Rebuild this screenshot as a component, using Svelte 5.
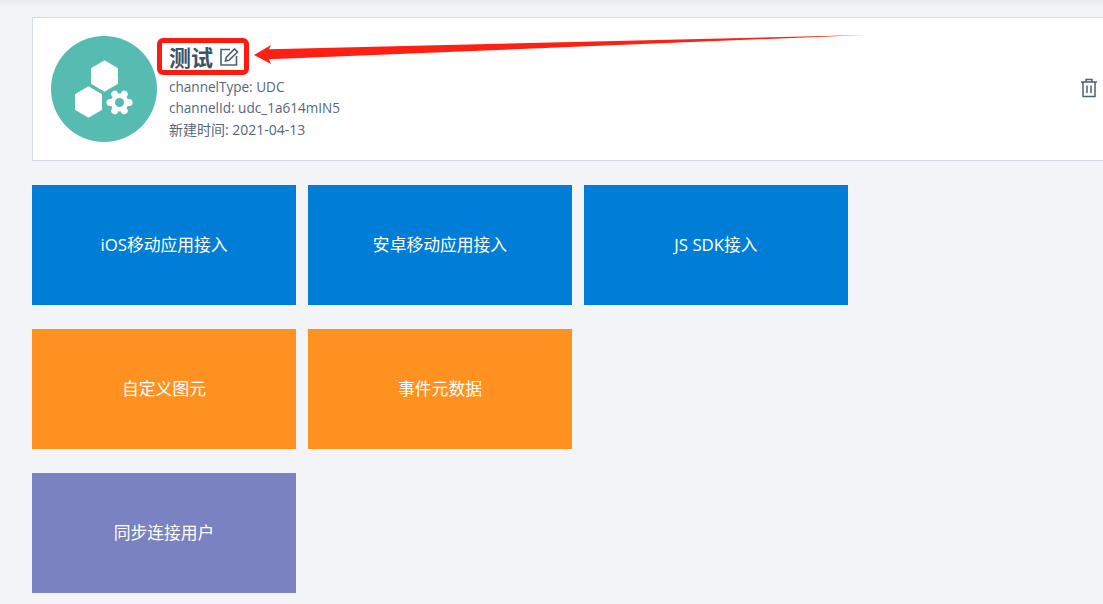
<script>
  const rows = [
    { color: "blue", items: ["iOS移动应用接入", "安卓移动应用接入", "JS SDK接入"] },
    { color: "orange", items: ["自定义图元", "事件元数据"] },
    { color: "purple", items: ["同步连接用户"] }
  ];
  const lobes = [0, 60, 120, 180, 240, 300];
</script>

<div class="page">
  <div class="card">
    <div class="avatar">
      <svg width="106" height="106" viewBox="0 0 106 106">
        <path class="hex" d="M53.500 26 L65.500 33 V47 L53.500 54 41.500 47 V33z" />
        <path class="hex" d="M37.500 52 L49.500 59 V73 L37.500 80 25.500 73 V59z" />
        <g transform="translate(68.500 66.500)">
          <circle r="9" fill="#fff" />
          {#each lobes as angle}
            <circle cx="9.500" r="3.500" fill="#fff" transform="rotate({angle})" />
          {/each}
          <circle r="4.500" fill="#56bcb1" />
        </g>
      </svg>
    </div>
    <div class="info">
      <div class="title">
        <span>测试</span>
        <svg class="edit" width="20" height="20" viewBox="0 0 20 20" fill="none" stroke="#4d6078" stroke-width="1.600">
          <path d="M11 2.500 H2 V18 H17.500 V9" />
          <path d="M6.500 14 l0.700 -3.500 L15.500 2 l3 3 -8.500 8.300z" />
        </svg>
      </div>
      <p>channelType: UDC</p>
      <p>channelId: udc_1a614mIN5</p>
      <p class="created">新建时间: 2021-04-13</p>
    </div>
    <svg class="trash" width="18" height="20" viewBox="0 0 18 20" fill="none" stroke="#4d6078" stroke-width="1.500">
      <path d="M1 4 H17 M6 4 V1.500 H12 V4 M3 4 V18.500 H15 V4 M7 7.500 V15 M11 7.500 V15" />
    </svg>
  </div>

  <div class="tiles">
    {#each rows as row}
      <div class="row">
        {#each row.items as item}
          <div class="tile {row.color}">{item}</div>
        {/each}
      </div>
    {/each}
  </div>

  <!-- red annotation drawn on top of the screenshot -->
  <div class="mark"></div>
  <svg class="arrow" width="630" height="50" viewBox="0 0 630 50">
    <path d="M4 35 L21 25 L19 29.300 L615 15 L19 39.300 L21 44 z" fill="#ff2014" />
  </svg>
</div>

<style>
  :global(body) {
    background: #f2f4f8;
    overflow: hidden;
  }
  .page {
    position: relative;
    width: 1103px;
    height: 604px;
    overflow: hidden;
    padding: 17px 0 0 32px;
    box-sizing: border-box;
    font-family: "Open Sans", "Noto Sans CJK SC", sans-serif;
    background: linear-gradient(#e9ebf0, #f2f4f8 8px);
  }
  .card {
    display: flex;
    align-items: center;
    width: 1080px;
    height: 144px;
    box-sizing: border-box;
    padding: 0 0 0 18px;
    background: #fff;
    border: 1px solid #d5dce6;
  }
  .avatar {
    flex: none;
    width: 106px;
    height: 106px;
    border-radius: 50%;
    background: #56bcb1;
  }
  .hex {
    fill: #fff;
    stroke: #fff;
    stroke-linejoin: round;
    stroke-width: 3;
  }
  .info {
    margin-left: 12px;
    margin-top: -2px;
    flex: 1;
    color: #54677b;
  }
  .title {
    display: flex;
    align-items: center;
    gap: 7px;
    height: 40px;
    font-size: 22px;
    font-weight: 700;
    color: #3c5369;
    line-height: 36px;
  }
  .edit {
    margin-left: -1px;
    margin-top: 1px;
  }
  .info p {
    margin: 0;
    font-size: 13.550px;
    line-height: 21px;
  }
  .info p.created {
    font-size: 14px;
  }
  .trash {
    position: absolute;
    left: 1080px;
    top: 78px;
  }
  .tiles {
    display: flex;
    flex-direction: column;
    gap: 24px;
    margin-top: 24px;
  }
  .row {
    display: flex;
    gap: 12px;
  }
  .tile {
    display: flex;
    align-items: center;
    justify-content: center;
    width: 264px;
    height: 120px;
    box-sizing: border-box;
    padding-bottom: 2px;
    color: #fff;
    font-size: 16.800px;
  }
  .blue { background: #007ed7; }
  .orange { background: #ff9120; }
  .purple { background: #7a82c1; }
  .mark {
    position: absolute;
    left: 157px;
    top: 38px;
    width: 92px;
    height: 37px;
    box-sizing: border-box;
    border: 5px solid #ff1a10;
    border-radius: 6px;
  }
  .arrow {
    position: absolute;
    left: 250px;
    top: 20px;
  }
</style>
